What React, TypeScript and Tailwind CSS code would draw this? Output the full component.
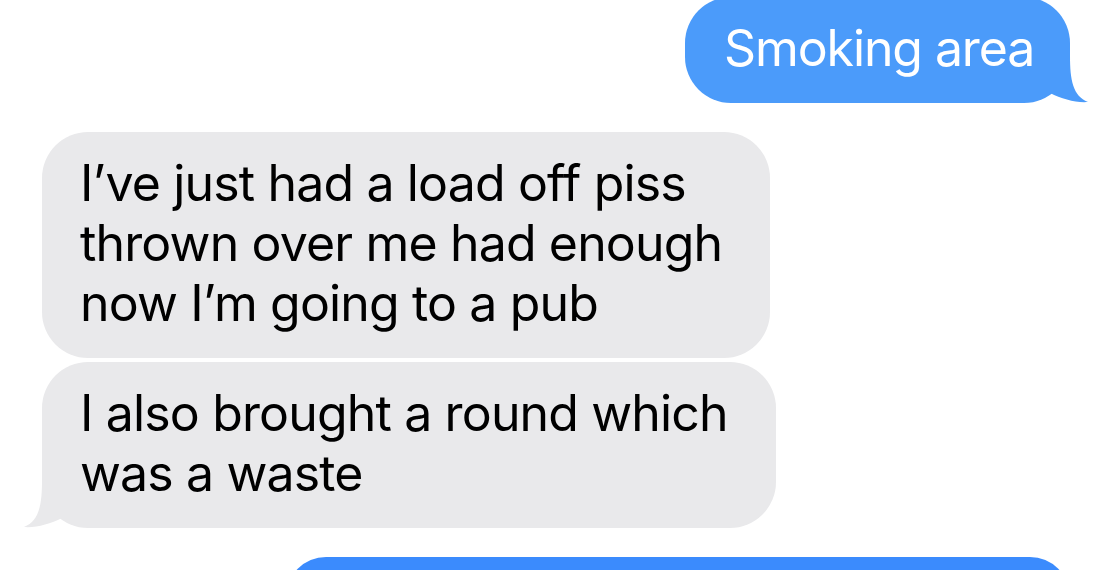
import type { ReactNode } from "react";

// iMessage-style bubble tail, drawn relative to the bubble's bottom corner
function Tail({ side, color }: { side: "left" | "right"; color: string }) {
  const pos = side === "right" ? "right-[-18px]" : "left-[-18px] -scale-x-100";
  return (
    <svg
      className={`absolute bottom-0 ${pos} pointer-events-none`}
      width="64"
      height="48"
      viewBox="-46 -47 64 48"
      fill={color}
    >
      <path d="M -46 -46 L 0 -46 C 0 -22, 3 -6, 18 0 C 6 1, -8 -3, -20 -9 L -46 -9 Z" />
    </svg>
  );
}

function Bubble({
  me,
  tail,
  className,
  children,
}: {
  me?: boolean;
  tail?: boolean;
  className?: string;
  children: ReactNode;
}) {
  const color = me ? "#4b9bfa" : "#e9e9eb";
  return (
    <div
      className={`relative rounded-[46px] py-[23px] text-[50px] leading-[60px] ${
        me ? "bg-[#4b9bfa] text-white tracking-[-0.022em]" : "bg-[#e9e9eb] text-black tracking-[-0.017em]"
      } ${className ?? ""}`}
    >
      {tail && <Tail side={me ? "right" : "left"} color={color} />}
      <p className="relative -mt-[2px] mb-[2px]">{children}</p>
    </div>
  );
}

export default function App() {
  return (
    <div className="flex h-[570px] w-[1119px] flex-col overflow-hidden bg-white font-['Inter',sans-serif]">
      <div className="-mt-[3px] flex justify-end pr-[49px]">
        <Bubble me tail className="w-[385px] pl-[39px]">
          Smoking area
        </Bubble>
      </div>

      <div className="mt-[29px] flex flex-col items-start gap-[4px] pl-[42px]">
        <Bubble className="w-[728px] pl-[38px] pr-[20px]">
          I’ve just had a load off piss thrown over me had enough now I’m going to a pub
        </Bubble>
        <Bubble tail className="w-[734px] pl-[38px] pr-[20px]">
          I also brought a round which was a waste
        </Bubble>
      </div>

      <div className="mt-[29px] flex justify-end pr-[49px]">
        <div className="h-[80px] w-[784px] shrink-0 rounded-[46px] bg-[#3b8bfd]" />
      </div>
    </div>
  );
}
